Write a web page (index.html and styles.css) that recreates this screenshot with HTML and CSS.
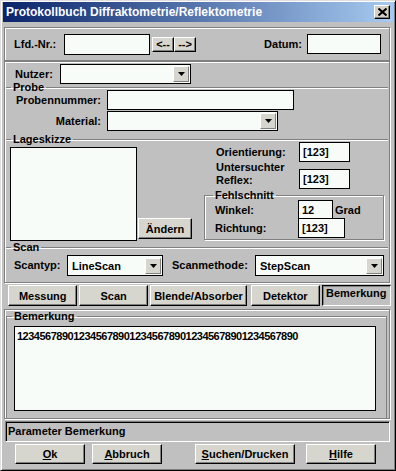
FILE: index.html
```html
<!DOCTYPE html>
<html lang="de">
<head>
    <meta charset="UTF-8">
    <meta name="viewport" content="width=device-width, initial-scale=1.0">
    <title>Protokollbuch Diffraktometrie/Reflektometrie</title>
    <link rel="stylesheet" href="styles.css">
</head>
<body>
    <div class="window">
        <div class="titlebar">
            <span class="title">Protokollbuch Diffraktometrie/Reflektometrie</span>
            <button class="close-btn">
                <svg width="9" height="8" viewBox="0 0 9 8"><path d="M0.5 0.5 L8.5 7.5 M8.5 0.5 L0.5 7.5" stroke="#000" stroke-width="2"/></svg>
            </button>
        </div>

        <div class="panel top-panel">
            <label class="lbl lbl-lfd">Lfd.-Nr.:</label>
            <input class="field f-lfd" type="text">
            <button class="btn nav-btn">&lt;--</button>
            <button class="btn nav-btn">--&gt;</button>
            <span class="spacer"></span>
            <label class="lbl lbl-datum">Datum:</label>
            <input class="field f-datum" type="text">
        </div>

        <div class="panel main-panel">
            <div class="row nutzer-row">
                <label class="lbl lbl-nutzer">Nutzer:</label>
                <div class="combo c-nutzer">
                    <span class="combo-val"></span>
                    <span class="combo-btn"><svg width="7" height="4" viewBox="0 0 7 4"><path d="M0 0 H7 L3.5 4 Z" fill="#000"/></svg></span>
                </div>
            </div>

            <fieldset class="group probe">
                <legend>Probe</legend>
                <div class="row probe-row1">
                    <label class="lbl lbl-probe">Probennummer:</label>
                    <input class="field f-probe" type="text">
                </div>
                <div class="row probe-row2">
                    <label class="lbl lbl-probe">Material:</label>
                    <div class="combo c-material">
                        <span class="combo-val"></span>
                        <span class="combo-btn"><svg width="7" height="4" viewBox="0 0 7 4"><path d="M0 0 H7 L3.5 4 Z" fill="#000"/></svg></span>
                    </div>
                </div>
            </fieldset>

            <fieldset class="group lage">
                <legend>Lageskizze</legend>
                <div class="lage-body">
                    <div class="sketch"></div>
                    <button class="btn btn-aendern">Ändern</button>
                    <div class="lage-right">
                        <div class="row row-orient">
                            <label class="lbl lbl-right">Orientierung:</label>
                            <input class="field f-small" type="text" value="[123]">
                        </div>
                        <div class="row row-reflex">
                            <label class="lbl lbl-right">Untersuchter<br>Reflex:</label>
                            <input class="field f-small" type="text" value="[123]">
                        </div>
                        <fieldset class="group fehl">
                            <legend>Fehlschnitt</legend>
                            <div class="row row-winkel">
                                <label class="lbl lbl-fehl">Winkel:</label>
                                <input class="field f-winkel" type="text" value="12">
                                <span class="lbl unit">Grad</span>
                            </div>
                            <div class="row row-richtung">
                                <label class="lbl lbl-fehl">Richtung:</label>
                                <input class="field f-richtung" type="text" value="[123]">
                            </div>
                        </fieldset>
                    </div>
                </div>
            </fieldset>

            <fieldset class="group scan">
                <legend>Scan</legend>
                <div class="row scan-row">
                    <label class="lbl lbl-scantyp">Scantyp:</label>
                    <div class="combo c-scantyp">
                        <span class="combo-val">LineScan</span>
                        <span class="combo-btn"><svg width="7" height="4" viewBox="0 0 7 4"><path d="M0 0 H7 L3.5 4 Z" fill="#000"/></svg></span>
                    </div>
                    <label class="lbl lbl-methode">Scanmethode:</label>
                    <div class="combo c-methode">
                        <span class="combo-val">StepScan</span>
                        <span class="combo-btn"><svg width="7" height="4" viewBox="0 0 7 4"><path d="M0 0 H7 L3.5 4 Z" fill="#000"/></svg></span>
                    </div>
                </div>
            </fieldset>
        </div>

        <div class="tabs">
            <button class="tab tab-messung">Messung</button>
            <button class="tab tab-scan">Scan</button>
            <button class="tab tab-blende">Blende/Absorber</button>
            <button class="tab tab-detektor">Detektor</button>
            <button class="tab tab-bem active">Bemerkung</button>
        </div>

        <div class="panel bem-panel">
            <fieldset class="group bem">
                <legend>Bemerkung</legend>
                <textarea class="field memo">12345678901234567890123456789012345678901234567890</textarea>
            </fieldset>
        </div>

        <div class="status">Parameter Bemerkung</div>

        <div class="buttons">
            <button class="btn dlg-btn btn-ok"><u>O</u>k</button>
            <button class="btn dlg-btn btn-abbruch"><u>A</u>bbruch</button>
            <button class="btn dlg-btn btn-suchen"><u>S</u>uchen/Drucken</button>
            <button class="btn dlg-btn btn-hilfe"><u>H</u>ilfe</button>
        </div>
    </div>
</body>
</html>
```

FILE: styles.css
```css
* {
    box-sizing: border-box;
}
body {
    margin: 0;
    background-color: #c0c0c0;
    font-family: 'Liberation Sans', Arial, sans-serif;
    font-size: 11px;
    font-weight: bold;
    color: #000;
}
.window {
    width: 396px;
    height: 471px;
    background-color: #c0c0c0;
    border: 1px solid;
    border-color: #dfdfdf #000 #000 #dfdfdf;
    box-shadow: inset 1px 1px #fff, inset -1px -1px #808080;
    padding: 1px 2px 2px 2px;
    display: flex;
    flex-direction: column;
}
.titlebar {
    height: 20px;
    flex: none;
    display: flex;
    align-items: center;
    padding: 0 3px 0 3px;
    background: linear-gradient(90deg, #0a246a, #a6caf0);
}
.title {
    flex: 1;
    color: #fff;
    font-size: 12px;
}
.close-btn {
    width: 16px;
    height: 14px;
    padding: 0;
    display: flex;
    align-items: center;
    justify-content: center;
    background-color: #d4d0c8;
    border: 1px solid;
    border-color: #fff #000 #000 #fff;
    box-shadow: inset -1px -1px #808080;
}
.panel {
    flex: none;
    margin: 0 3px 0 1px;
    border: 1px solid #808080;
    box-shadow: inset 1px 1px #fff, 1px 1px #fff;
}
.row {
    display: flex;
    align-items: center;
}
.lbl {
    white-space: nowrap;
    line-height: 13px;
}
.field {
    font-family: inherit;
    font-size: 11px;
    font-weight: bold;
    color: #000;
    height: 20px;
    padding: 0 3px;
    margin: 0;
    border: 1px solid #000;
    background-color: #f8fcf8;
    outline: none;
}
.btn {
    font-family: inherit;
    font-size: 11px;
    font-weight: bold;
    color: #000;
    padding: 0;
    background-color: #d6d6ce;
    border: 1px solid;
    border-color: #fff #000 #000 #fff;
    box-shadow: inset -1px -1px #808080;
}
.combo {
    display: flex;
    height: 20px;
    border: 1px solid #000;
    background-color: #f8fcf8;
    align-items: center;
}
.combo-val {
    flex: 1;
    padding-left: 4px;
}
.combo-btn {
    width: 16px;
    height: 16px;
    margin-right: 1px;
    display: flex;
    align-items: center;
    justify-content: center;
    background-color: #d6d6ce;
    border: 1px solid;
    border-color: #fff #808080 #808080 #fff;
}

/* top panel */
.top-panel {
    margin-top: 5px;
    height: 34px;
    display: flex;
    align-items: center;
    padding: 0 8px 0 9px;
}
.lbl-lfd {
    width: 50px;
}
.f-lfd {
    width: 86px;
    height: 21px;
}
.nav-btn {
    width: 22px;
    height: 15px;
    line-height: 11px;
}
.nav-btn:first-of-type {
    margin-left: 2px;
}
.spacer {
    flex: 1;
}
.lbl-datum {
    margin-right: 5px;
}
.f-datum {
    width: 74px;
}

/* main panel */
.main-panel {
    height: 222px;
    padding: 2px 1px 0 1px;
}
.nutzer-row {
    padding-left: 9px;
}
.lbl-nutzer {
    width: 45px;
}
.c-nutzer {
    width: 131px;
}
.group {
    margin: 0;
    padding: 0;
    min-width: 0;
    border: 0;
    border-top: 1px solid #808080;
    box-shadow: inset 0 1px #fff;
}
.group > legend {
    line-height: 12px;
    padding: 0 2px;
    margin-left: 5px;
}
.probe {
    height: 52px;
    margin-top: -3px;
}
.lbl-probe {
    width: 101px;
    text-align: right;
    padding-right: 6px;
}
.probe-row1 {
    margin-top: -3px;
}
.f-probe {
    width: 187px;
}
.probe-row2 {
    margin-top: 1px;
}
.c-material {
    width: 171px;
}
.lage {
    height: 108px;
}
.lage-body {
    display: flex;
    align-items: flex-start;
}
.sketch {
    width: 127px;
    height: 94px;
    margin: 2px 0 0 4px;
    border: 1px solid #000;
    background-color: #f8fcf8;
}
.btn-aendern {
    width: 54px;
    height: 21px;
    margin: 73px 0 0 1px;
}
.lage-right {
    width: 180px;
    margin: -3px 0 0 12px;
}
.lbl-right {
    width: 95px;
    padding-left: 12px;
}
.f-small {
    width: 51px;
}
.row-reflex {
    align-items: flex-start;
    margin-top: -1px;
}
.row-reflex .field {
    margin-top: 8px;
}
.fehl {
    height: 51px;
    border: 1px solid #808080;
    box-shadow: inset 1px 1px #fff, 1px 1px #fff;
}
.fehl > legend {
    margin-left: 8px;
}
.lbl-fehl {
    width: 93px;
    padding-left: 10px;
}
.row-winkel {
    margin-top: -1px;
}
.f-winkel {
    width: 35px;
}
.unit {
    margin-left: 2px;
}
.row-richtung {
    margin-top: -2px;
}
.f-richtung {
    width: 47px;
}
.scan {
    height: 40px;
}
.scan-row {
    margin-top: 2px;
    padding-left: 8px;
}
.lbl-scantyp {
    width: 53px;
}
.c-scantyp {
    width: 96px;
    height: 21px;
}
.lbl-methode {
    margin-left: 9px;
    width: 83px;
}
.c-methode {
    width: 129px;
    height: 21px;
}

/* tabs */
.tabs {
    flex: none;
    display: flex;
    height: 21px;
    margin: 2px 0 0 5px;
}
.tab {
    font-family: inherit;
    font-size: 11px;
    font-weight: bold;
    color: #000;
    height: 21px;
    padding: 0;
    margin-right: 2px;
    background-color: #d6d6ce;
    border: 1px solid;
    border-color: #fff #000 #000 #fff;
    box-shadow: inset -1px -1px #808080;
}
.tab-messung { width: 70px; }
.tab-scan { width: 69px; }
.tab-blende { width: 98px; margin-right: 4px; }
.tab-detektor { width: 69px; }
.tab-bem {
    width: 70px;
}
.tab.active {
    background-color: #c0c0c0;
    border-color: #000 #fff #fff #000;
    box-shadow: inset 1px 1px #808080;
    padding-bottom: 5px;
}

/* bemerkung */
.bem-panel {
    margin-top: 3px;
    height: 110px;
    padding: 0 2px 0 1px;
}
.bem {
    height: 100%;
    border-left: 1px solid #808080;
    border-right: 1px solid #808080;
}
.memo {
    display: block;
    width: 362px;
    height: 85px;
    margin: 4px 0 0 7px;
    padding: 3px 2px;
    resize: none;
    letter-spacing: -0.5px;
    overflow: hidden;
}

/* status + buttons */
.status {
    flex: none;
    height: 21px;
    margin: 2px 3px 0 2px;
    padding-left: 2px;
    line-height: 19px;
    border: 1px solid;
    border-color: #808080 #fff #fff #808080;
    box-shadow: inset 1px 1px #000;
}
.buttons {
    flex: none;
    display: flex;
    margin: 2px 0 0 12px;
}
.dlg-btn {
    height: 20px;
    width: 70px;
}
.btn-abbruch {
    margin-left: 7px;
}
.btn-suchen {
    width: 100px;
    margin-left: 33px;
}
.btn-hilfe {
    margin-left: 11px;
}
```
